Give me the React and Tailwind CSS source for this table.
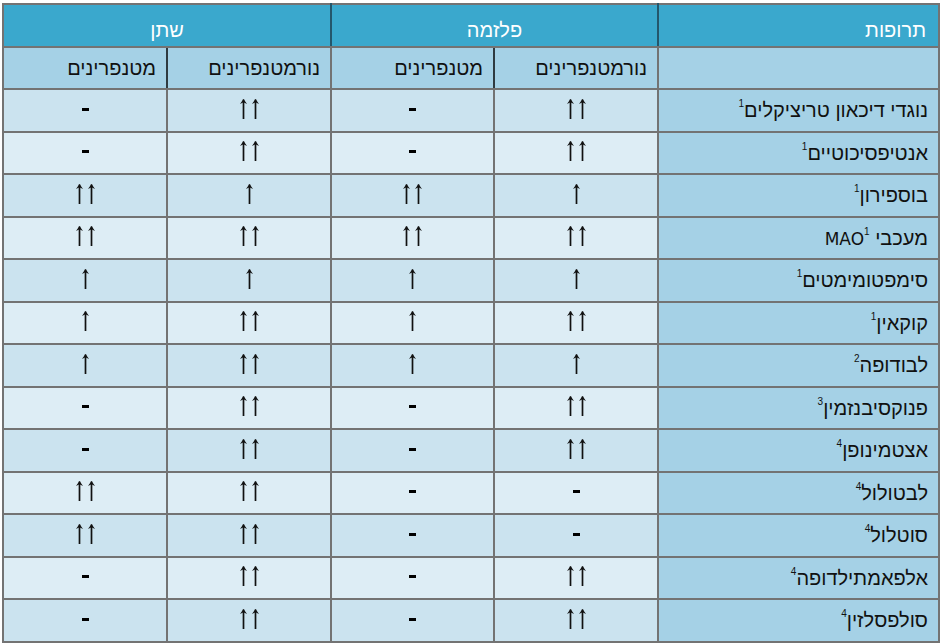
import React from 'react';

const UP2 = 2;
const UP1 = 1;
const NONE = 0;

// [שם, הערה, פלזמה נורמט', פלזמה מט', שתן נורמט', שתן מט']
const rows = [
  ['נוגדי דיכאון טריציקלים', '1', UP2, NONE, UP2, NONE],
  ['אנטיפסיכוטיים', '1', UP2, NONE, UP2, NONE],
  ['בוספירון', '1', UP1, UP2, UP1, UP2],
  ['מעכבי ', '1', UP2, UP2, UP2, UP2, 'MAO'],
  ['סימפטומימטים', '1', UP1, UP1, UP1, UP1],
  ['קוקאין', '1', UP2, UP1, UP2, UP1],
  ['לבודופה', '2', UP1, UP1, UP2, UP1],
  ['פנוקסיבנזמין', '3', UP2, NONE, UP2, NONE],
  ['אצטמינופן', '4', UP2, NONE, UP2, NONE],
  ['לבטולול', '4', NONE, NONE, UP2, UP2],
  ['סוטלול', '4', NONE, NONE, UP2, UP2],
  ['אלפאמתילדופה', '4', UP2, NONE, UP2, NONE],
  ['סולפסלזין', '4', UP2, NONE, UP2, NONE],
];

const Arrow = () => (
  <svg width="9" height="21" viewBox="0 0 9 21" className="inline-block">
    <path d="M4.5 1.5 V21" stroke="#111" strokeWidth="1.7" fill="none" />
    <path d="M1 6 L4.5 1 L8 6 L4.5 4.2 Z" fill="#111" />
  </svg>
);

const Mark = ({ v }) => {
  if (v === NONE) return <span className="inline-block w-[7px] h-[3px] bg-black align-middle" />;
  return (
    <span className="inline-flex gap-[3px] align-middle">
      <Arrow />
      {v === UP2 && <Arrow />}
    </span>
  );
};

export default function App() {
  return (
    <div className="bg-white w-[940px] h-[643px] pt-[3px] pl-[2px] font-['Liberation_Sans','DejaVu_Sans',sans-serif] text-[20px] leading-none text-[#111]">
      <table dir="rtl" className="w-[936px] border-collapse table-fixed border-2 border-[#737373]">
        <colgroup>
          <col className="w-[281px]" />
          <col className="w-[164px]" />
          <col className="w-[163px]" />
          <col className="w-[164px]" />
          <col className="w-[164px]" />
        </colgroup>
        <thead>
          <tr className="h-[42.5px] bg-[#3aa8cd] text-white">
            <th className="text-right font-normal pr-[12px] pt-[10px] border-2 border-[#737373] border-l-[#24566b]">תרופות</th>
            <th colSpan={2} className="text-center font-normal pt-[10px] border-2 border-[#737373] border-l-[#24566b] border-r-[#24566b]">פלזמה</th>
            <th colSpan={2} className="text-center font-normal pt-[10px] border-2 border-[#737373] border-r-[#24566b]">שתן</th>
          </tr>
          <tr className="h-[42.5px] bg-[#a5d1e6]">
            <th className="border-2 border-[#737373]" />
            <th className="text-right font-normal pr-[10px] border-2 border-[#737373] border-l-[#2e3a40]">נורמטנפרינים</th>
            <th className="text-right font-normal pr-[10px] border-2 border-[#737373] border-r-[#2e3a40]">מטנפרינים</th>
            <th className="text-right font-normal pr-[10px] border-2 border-[#737373] border-l-[#2e3a40]">נורמטנפרינים</th>
            <th className="text-right font-normal pr-[10px] border-2 border-[#737373] border-r-[#2e3a40]">מטנפרינים</th>
          </tr>
        </thead>
        <tbody>
          {rows.map(([name, note, a, b, c, d, latin], i) => (
            <tr key={name} className={i % 2 === 0 ? 'h-[42.5px] bg-[#cbe3ef]' : 'h-[42.5px] bg-[#ddedf5]'}>
              <td className="text-right pr-[10px] bg-[#a5d1e6] border-2 border-[#737373]">
                {name}
                {latin && <span className="font-['DejaVu_Sans',sans-serif] text-[17px]">{latin}</span>}
                <sup className="text-[10px] leading-none align-[5px]">{note}</sup>
              </td>
              {[a, b, c, d].map((v, j) => (
                <td key={j} className="text-center pb-[5px] border-2 border-[#737373]">
                  <Mark v={v} />
                </td>
              ))}
            </tr>
          ))}
        </tbody>
      </table>
    </div>
  );
}
